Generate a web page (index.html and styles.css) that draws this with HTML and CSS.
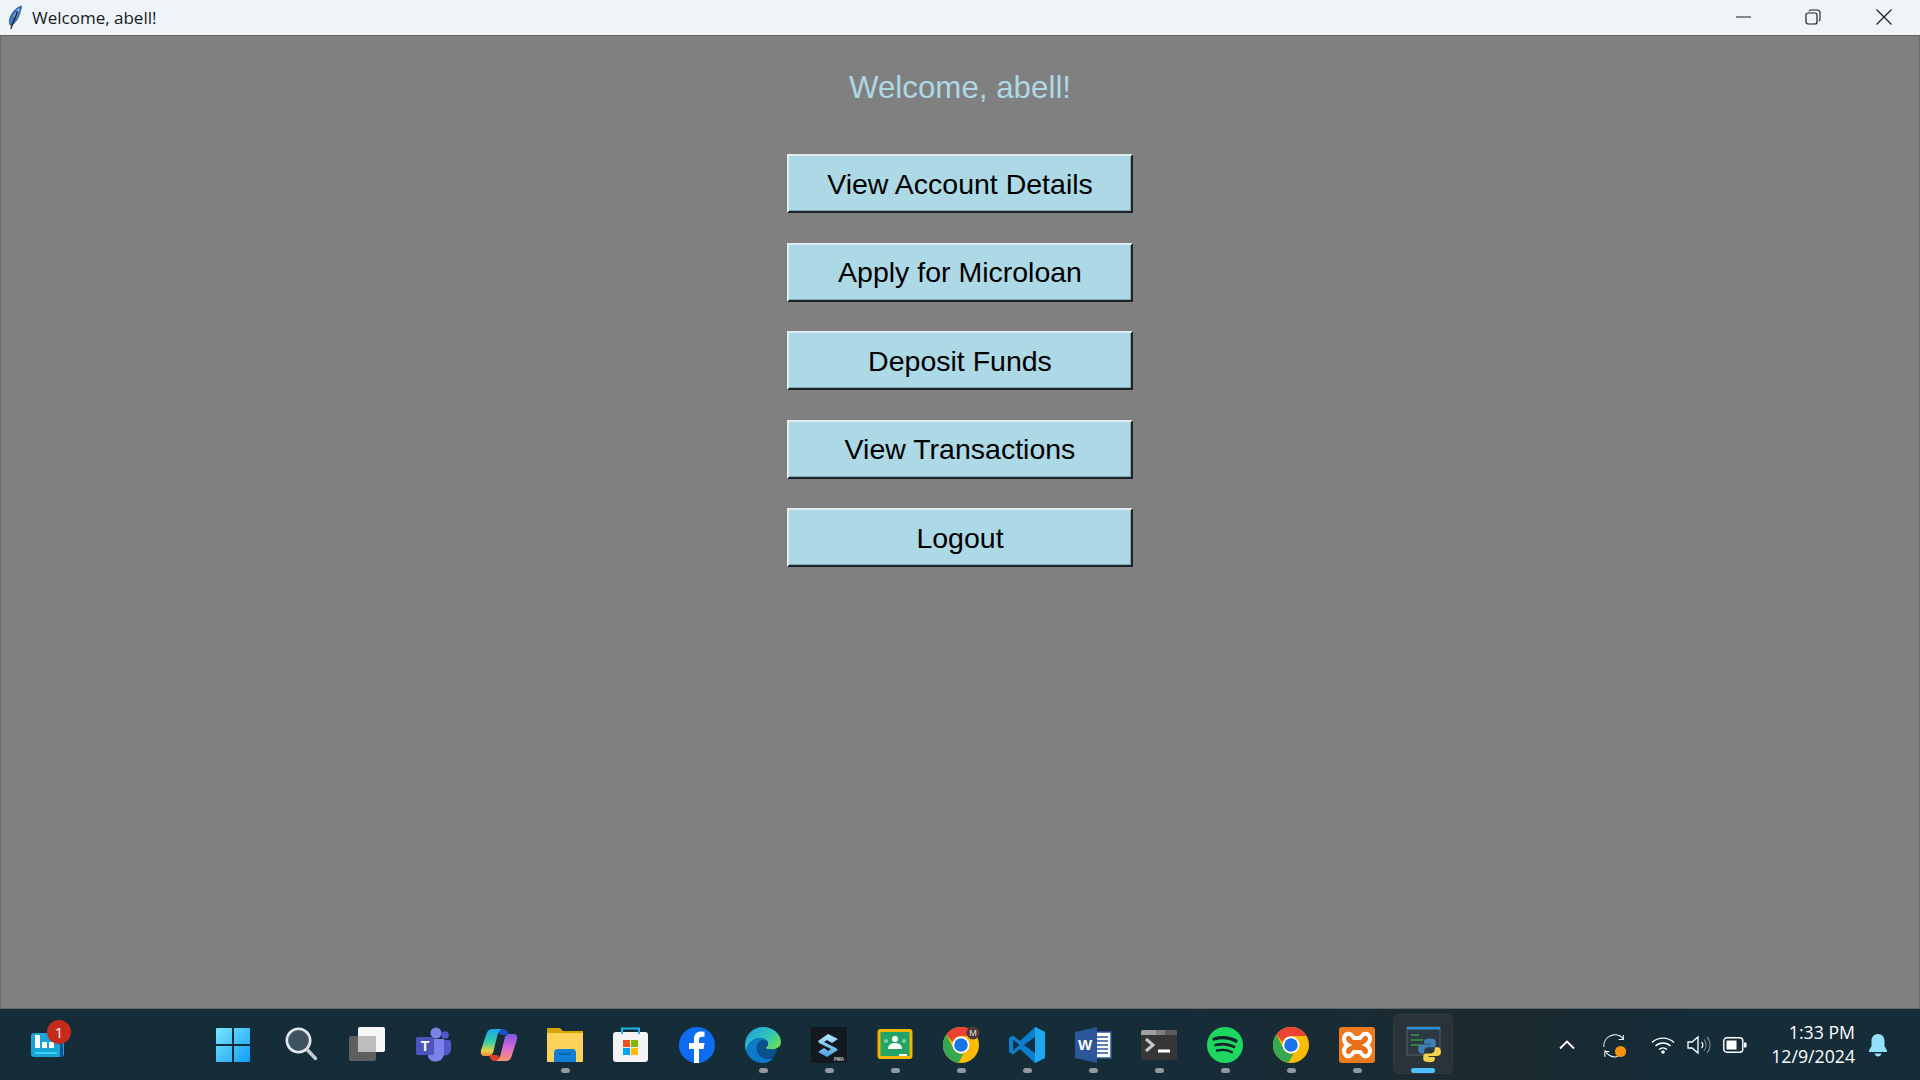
FILE: index.html
```html
<!DOCTYPE html>
<html lang="en">
<head>
<meta charset="utf-8">
<title>Welcome, abell!</title>
<link rel="stylesheet" href="styles.css">
</head>
<body>
<div class="screen">
  <header class="titlebar">
    <svg class="feather" viewBox="0 0 16 26"><path d="M14.500 1C9 2.500 4 8 2.500 15c-.4 2 0 4 1 5.500C8 19 11 14 12.500 9 13.500 6 14.500 3.500 14.500 1z" fill="#3a7ad0" stroke="#3b4a5f" stroke-width=".8"/><path d="M12 4 7 12" stroke="#a8cef2" stroke-width="1.500"/><path d="M10.500 6 3.800 24" stroke="#1a1a1a" stroke-width="1.200"/></svg>
    <span class="title-text">Welcome, abell!</span>
    <div class="win-controls">
      <svg class="wc wc-min" viewBox="0 0 16 16"><path d="M0 8h15" stroke="#1a1a1a" stroke-width="1"/></svg>
      <svg class="wc wc-max" viewBox="0 0 16 16"><rect x="1" y="4" width="11" height="11" rx="2" fill="none" stroke="#1a1a1a" stroke-width="1.200"/><path d="M4 2.200c.3-.7.900-1.200 1.800-1.200H12c1.700 0 3 1.300 3 3v6.200c0 .9-.5 1.500-1.200 1.800" fill="none" stroke="#1a1a1a" stroke-width="1.100"/></svg>
      <svg class="wc wc-close" viewBox="0 0 16 16"><path d="M.5.500l15 15M15.500.500l-15 15" stroke="#1a1a1a" stroke-width="1.200"/></svg>
    </div>
  </header>

  <main class="app">
    <h1 class="heading">Welcome, abell!</h1>
    <div class="menu">
      <button class="btn">View Account Details</button>
      <button class="btn">Apply for Microloan</button>
      <button class="btn">Deposit Funds</button>
      <button class="btn">View Transactions</button>
      <button class="btn">Logout</button>
    </div>
  </main>

  <footer class="taskbar">
    <div class="widget">
      <svg class="widget-icon" viewBox="0 0 34 24"><rect x="0" y="0" width="33" height="24" rx="3" fill="#1ba3d6"/><rect x="29" y="0" width="3" height="24" fill="#0f4f90"/><rect x="4" y="2" width="5" height="13" fill="#fff"/><rect x="11" y="9" width="5" height="6" fill="#fff"/><rect x="18" y="9" width="5" height="6" fill="#fff"/><rect x="4" y="19" width="22" height="2" fill="#35d6ef"/></svg>
      <span class="badge">1</span>
    </div>

    <div class="apps">
      <div class="slot slot-start"><svg class="ico" viewBox="0 0 36 36"><defs><linearGradient id="w" x1="0" y1="0" x2="1" y2="1"><stop offset="0" stop-color="#7be8fb"/><stop offset="1" stop-color="#109cfa"/></linearGradient></defs><path d="M2 1h15v16H1V2a1 1 0 0 1 1-1zM19 1h15a1 1 0 0 1 1 1v15H19zM1 19h16v16H2a1 1 0 0 1-1-1zM19 19h16v15a1 1 0 0 1-1 1H19z" fill="url(#w)"/></svg></div>

      <div class="slot"><svg class="ico" viewBox="0 0 36 36"><circle cx="15.500" cy="13.500" r="11.700" fill="#3e5561" stroke="#e4e8ea" stroke-width="2.600"/><path d="M24.500 23l8 8.500" stroke="#c6cbcd" stroke-width="3.400" stroke-linecap="round"/></svg></div>

      <div class="slot"><svg class="ico" viewBox="0 0 36 36"><rect x="0" y="9" width="27" height="25" rx="2" fill="#5f5f5f"/><rect x="9" y="0" width="27" height="25" rx="2" fill="#f6f6f6"/><rect x="9" y="9" width="18" height="16" fill="#bdbdbd"/></svg></div>

      <div class="slot"><svg class="ico" viewBox="0 0 36 36"><circle cx="21" cy="6" r="5.500" fill="#7b83eb"/><circle cx="30" cy="8" r="3.800" fill="#5059c9"/><path d="M25 13h9a2 2 0 0 1 2 2v8a6 6 0 0 1-8 5z" fill="#5059c9"/><path d="M13 12h16v14a8.500 8.500 0 0 1-16 4z" fill="#7b83eb"/><rect x="1" y="10" width="18" height="18" rx="1.500" fill="#4b53bc"/><text x="10" y="24" class="ico-t">T</text></svg></div>

      <div class="slot"><svg class="ico" viewBox="0 0 36 36"><defs><linearGradient id="c1" x1="0" y1="0" x2="0" y2="1"><stop offset="0" stop-color="#1ba6f0"/><stop offset=".5" stop-color="#38d0a0"/><stop offset=".8" stop-color="#e8d044"/><stop offset="1" stop-color="#f08a3a"/></linearGradient><linearGradient id="c2" x1="0" y1="0" x2="0" y2="1"><stop offset="0" stop-color="#7a5ae0"/><stop offset=".5" stop-color="#d868d8"/><stop offset="1" stop-color="#f89a6a"/></linearGradient></defs><path d="M14 2h8c3 0 5 2 6 6h-8z" fill="#1c4fc4"/><path d="M22 34h-8c-3 0-5-2-6-6h8z" fill="#e0402a"/><path d="M11 2h10c-3 1-4 4-5 8l-4 16c-1 2-3 3-5 3H3C0 29-1 26 .5 22L5 8C6 4 8 2 11 2z" fill="url(#c1)"/><path d="M25 34H15c3-1 4-4 5-8l4-16c1-2 3-3 5-3h4c3 0 4 3 2.500 7L31 28c-1 4-3 6-6 6z" fill="url(#c2)"/></svg></div>

      <div class="slot has-dot"><svg class="ico" viewBox="0 0 36 36"><path d="M0 2a1 1 0 0 1 1-1h12l3 3h20v30a1 1 0 0 1-1 1H1a1 1 0 0 1-1-1z" fill="#d9a300"/><path d="M0 6h36v28a1 1 0 0 1-1 1H1a1 1 0 0 1-1-1z" fill="#fdd25a"/><path d="M7 35v-9a4 4 0 0 1 4-4h14a4 4 0 0 1 4 4v9z" fill="#0f7fd6"/><path d="M12 27h12" stroke="#0a5a9e" stroke-width="1.500"/></svg></div>

      <div class="slot"><svg class="ico" viewBox="0 0 36 36"><rect x="0" y="5" width="35" height="30" rx="3" fill="#f4f4f4"/><path d="M9 7V1.500h17V7" fill="none" stroke="#1fb6e8" stroke-width="2"/><rect x="10" y="13" width="7" height="7" fill="#f25022"/><rect x="18" y="13" width="7" height="7" fill="#7fba00"/><rect x="10" y="21" width="7" height="7" fill="#00a4ef"/><rect x="18" y="21" width="7" height="7" fill="#ffb900"/></svg></div>

      <div class="slot"><svg class="ico" viewBox="0 0 36 36"><circle cx="18" cy="18" r="18" fill="#0d6cf2"/><path d="M15 36V22h-5v-6h5v-4c0-5 3-7.500 7-7.500 2 0 3.500.3 3.500.3v5h-2.600c-2.300 0-2.900 1.400-2.900 2.900V16h5.500l-.9 6H20v14z" fill="#fff"/></svg></div>

      <div class="slot has-dot"><svg class="ico" viewBox="0 0 36 36"><defs><linearGradient id="e1" x1="0" y1="0" x2="1" y2=".7"><stop offset="0" stop-color="#1b9de2"/><stop offset=".6" stop-color="#2fc4b8"/><stop offset="1" stop-color="#6fdc5c"/></linearGradient></defs><path d="M18 0C8 0 0 8 0 18c0 3 .500 5 1 6 2-8 8-13 14-13 5 0 8 3 8 6 0 1-1 3-3 4 4 2 9 2 12 0 3-1 4-4 4-6C36 7 28 0 18 0z" fill="url(#e1)"/><path d="M1 24c2-8 8-13 14-13 3 0 5 1 6 2-7-1-10 5-9 10s5 9 13 9c2 0 3 0 4-1-3 3-7 5-11 5C10 36 3 31 1 24z" fill="#0c7ac8"/><path d="M21 13c2 1 2 3 2 4 0 1-1 3-3 4 4 2 9 2 12 0-1 7-4 11-7 11-8 0-12-4-13-9s2-11 9-10z" fill="#0b4f8f"/></svg></div>

      <div class="slot has-dot"><svg class="ico" viewBox="0 0 36 36"><defs><linearGradient id="s1" x1="0" y1="0" x2="0" y2="1"><stop offset="0" stop-color="#b4ecf8"/><stop offset="1" stop-color="#4a9fe0"/></linearGradient></defs><rect width="36" height="36" fill="#14181f"/><path d="M7 14L17 7l10 5-6 4-5-3-3 2 12 6 2 2-11 7-9-5 6-4 4 3 3-2-12-6z" fill="url(#s1)"/><text x="28" y="33.500" class="ico-pma">PMA</text></svg></div>

      <div class="slot has-dot"><svg class="ico" viewBox="0 0 36 36"><rect x="2" y="3.500" width="32" height="27" rx="1.500" fill="#22a565" stroke="#f4b400" stroke-width="3"/><circle cx="18" cy="12" r="3" fill="#fff"/><path d="M11 22c0-4 3-6 7-6s7 2 7 6z" fill="#fff"/><circle cx="9" cy="14" r="2" fill="#7fd0a8"/><circle cx="27" cy="14" r="2" fill="#7fd0a8"/><path d="M22 28h8" stroke="#fff" stroke-width="2"/></svg></div>

      <div class="slot has-dot"><svg class="ico" viewBox="0 0 36 36"><use href="#chrome-mark"/><circle cx="30" cy="6" r="6.500" fill="#4e3a35"/><text x="30" y="9" class="ico-m">M</text></svg></div>

      <div class="slot has-dot"><svg class="ico" viewBox="0 0 36 36"><path d="M26 0l10 5v26l-10 5-15-14-7 5.500L0 25v-14l4-2.500 7 5.500z" fill="#0b7fcb"/><path d="M26 0l10 5v26l-10 5z" fill="#1fa8f0"/><path d="M26 10v16l-11-8z" fill="#14202a" opacity=".85"/><path d="M4 12.500l6.500 5.500-6.500 5.500z" fill="#14202a" opacity=".85"/></svg></div>

      <div class="slot has-dot"><svg class="ico" viewBox="0 0 36 36"><rect x="16" y="5" width="20" height="26" fill="#fff" stroke="#2b579a" stroke-width="1.500"/><path d="M20 10h13M20 14h13M20 18h13M20 22h13M20 26h13" stroke="#2b579a" stroke-width="1.600"/><path d="M0 5L22 0v36L0 31z" fill="#2b579a"/><text x="10" y="23" class="ico-w">W</text></svg></div>

      <div class="slot has-dot"><svg class="ico" viewBox="0 0 36 36"><rect y="3" width="36" height="30" rx="2" fill="#363636"/><path d="M2 3h13v5H0V5a2 2 0 0 1 2-2z" fill="#a0a0a0"/><path d="M15 3h9v5h-9z" fill="#808080"/><path d="M24 3h10a2 2 0 0 1 2 2v3H24z" fill="#5c5c5c"/><path d="M5 12l7 6-7 6" fill="none" stroke="#c8c8c8" stroke-width="3"/><path d="M17 24h12" stroke="#fff" stroke-width="3"/></svg></div>

      <div class="slot has-dot"><svg class="ico" viewBox="0 0 36 36"><circle cx="18" cy="18" r="18" fill="#1ed760"/><path d="M7 12c7-2 15-2 22 2" fill="none" stroke="#14202a" stroke-width="3.200" stroke-linecap="round"/><path d="M8.500 18c6-1.500 13-1.200 18.500 1.800" fill="none" stroke="#14202a" stroke-width="2.800" stroke-linecap="round"/><path d="M10 23.500c5-1 10.500-.8 15 1.700" fill="none" stroke="#14202a" stroke-width="2.300" stroke-linecap="round"/></svg></div>

      <div class="slot has-dot"><svg class="ico" viewBox="0 0 36 36"><g id="chrome-mark"><circle cx="18" cy="18" r="18" fill="#fbbc04"/><path d="M18 0a18 18 0 0 1 15.600 9H18a9 9 0 0 0-8.500 6L3.300 7.600A18 18 0 0 1 18 0z" fill="#ea4335"/><path d="M3.300 7.600L10.600 22a9 9 0 0 0 10 4.500L15.600 35.800A18 18 0 0 1 3.300 7.600z" fill="#34a853"/><circle cx="18" cy="18" r="8.500" fill="#fff"/><circle cx="18" cy="18" r="6.800" fill="#1a73e8"/></g></svg></div>

      <div class="slot has-dot"><svg class="ico" viewBox="0 0 36 36"><rect width="36" height="36" rx="3" fill="#ee7a1e"/><path d="M11 7c-3-1-6 1-6 5 0 3 2 5 4 6-2 1-4 3-4 6 0 4 3 6 6 5 2-1 3-3 4-4h6c1 1 2 3 4 4 3 1 6-1 6-5 0-3-2-5-4-6 2-1 4-3 4-6 0-4-3-6-6-5-2 1-3 3-4 4h-6c-1-1-2-3-4-4z" fill="#e8701a" stroke="#fff" stroke-width="4"/></svg></div>

      <div class="slot slot-active"><svg class="ico" viewBox="0 0 36 36"><rect x="2" y="0" width="33" height="28" fill="#2c3943" stroke="#5a6a78" stroke-width=".8"/><rect x="2" y="0" width="33" height="2.500" fill="#2a8fd0"/><path d="M6 8h8M6 13h12M6 18h10" stroke="#2f9a4a" stroke-width="1.300"/><g transform="translate(6 3.500) scale(.88)"><path d="M21 9c-4 0-6 1-6 3v3h7v1h-10c-2.500 0-4 2-4 5s1.500 5 4 5h3v-3c0-2 2-4 4-4h6c2 0 3-1 3-3v-4c0-2-3-3-7-3z" fill="#3f7fb5"/><path d="M21 36c4 0 6-1 6-3v-3h-7v-1h10c2.500 0 4-2 4-5s-1.500-5-4-5h-3v3c0 2-2 4-4 4h-6c-2 0-3 1-3 3v4c0 2 3 3 7 3z" fill="#f5d24c"/></g></svg></div>
    </div>

    <div class="tray">
      <svg class="t-chev" viewBox="0 0 16 10"><path d="M1 8.500L8 1.500l7 7" fill="none" stroke="#fff" stroke-width="1.800"/></svg>
      <svg class="t-sync" viewBox="0 0 26 26"><path d="M22 5A12 12 0 0 0 1 14" fill="none" stroke="#fff" stroke-width="1.100"/><path d="M22 1v5h-5" fill="none" stroke="#fff" stroke-width="1.100"/><path d="M2 17.500a12 12 0 0 0 14 7" fill="none" stroke="#fff" stroke-width="1.100"/><path d="M2 25v-6h5" fill="none" stroke="#fff" stroke-width="1.100"/><circle cx="19" cy="19" r="6" fill="#f7930e"/></svg>
      <svg class="t-wifi" viewBox="0 0 24 18"><path d="M1 6.500a16 16 0 0 1 22 0M4.500 10a11 11 0 0 1 15 0M8 13.500a6 6 0 0 1 8 0" fill="none" stroke="#fff" stroke-width="1.400"/><circle cx="12" cy="16" r="1.800" fill="#fff"/></svg>
      <svg class="t-vol" viewBox="0 0 24 20"><path d="M1 7h4l6-5v16l-6-5H1z" fill="none" stroke="#fff" stroke-width="1.300"/><path d="M14.500 7a4 4 0 0 1 0 6" fill="none" stroke="#fff" stroke-width="1.200"/><path d="M17 4.500a8 8 0 0 1 0 11M20 2a12 12 0 0 1 0 16" fill="none" stroke="#71808a" stroke-width="1.200"/></svg>
      <svg class="t-batt" viewBox="0 0 24 16"><rect x=".8" y=".8" width="19" height="14.400" rx="3" fill="none" stroke="#fff" stroke-width="1.400"/><rect x="3.500" y="3.500" width="10" height="9" fill="#fff"/><path d="M21 5.500h1.500a1 1 0 0 1 1 1v3a1 1 0 0 1-1 1H21z" fill="#fff"/></svg>
      <div class="clock"><span>1:33 PM</span><span>12/9/2024</span></div>
      <svg class="t-bell" viewBox="0 0 20 24"><path d="M10 1c-4 0-6.500 3-6.500 7v5L1 17.500c-.3.800 0 1.500 1 1.500h16c1 0 1.300-.7 1-1.500L16.500 13V8C16.500 4 14 1 10 1z" fill="#93e1fb"/><path d="M6.500 20.500h7C13 22.500 11.500 23.500 10 23.500s-3-1-3.500-3z" fill="#93e1fb"/></svg>
    </div>
  </footer>
</div>
</body>
</html>
```

FILE: styles.css
```css
* { box-sizing: border-box; }
html, body { margin: 0; padding: 0; height: 100%; overflow: hidden; }
.screen { width: 1920px; height: 1080px; display: flex; flex-direction: column; }

.titlebar {
  height: 36px; flex: none; display: flex; align-items: center;
  background: #eff4f9; border-bottom: 1px solid #636363; padding-left: 7px;
}
.feather { width: 16px; height: 26px; margin-right: 9px; }
.title-text { font: 400 17px "Open Sans", "Noto Sans", sans-serif; color: #1a1a1a; }
.win-controls { margin-left: auto; display: flex; align-items: center; margin-top: -2px; }
.wc { width: 16px; height: 16px; }
.wc-min { margin-right: 53px; }
.wc-max { margin-right: 55px; }
.wc-close { margin-right: 28px; }

.app {
  flex: 1; background: #808080; display: flex; flex-direction: column; align-items: center;
  box-shadow: inset 1px 0 0 #6c6c6c, inset -1px 0 0 #6c6c6c, inset 0 -1px 0 #5e6366;
  padding-top: 33px;
}
.heading {
  margin: 0; font: 400 31.300px/38px "Liberation Sans", Arial, sans-serif; color: #add8e6;
}
.menu { margin-top: 47px; display: flex; flex-direction: column; gap: 29.600px; }
.btn {
  width: 346px; height: 59px; padding: 1px 0 0; background: #add8e6; color: #000;
  font: 400 28.500px "Liberation Sans", Arial, sans-serif;
  border-style: solid; border-width: 2px; border-color: #e0edf1 #1c2428 #1c2428 #e0edf1;
  box-shadow: inset -1px -1px 0 #86a8b3;
}

.taskbar {
  height: 71px; flex: none; position: relative; display: flex; align-items: center;
  background: linear-gradient(90deg, #152c39 0%, #152c39 60%, #1b2b31 75%, #1b2a30 79%, #152c39 88%, #152c39 100%);
}
.widget { position: relative; width: 34px; height: 24px; margin-left: 31px; }
.widget-icon { width: 34px; height: 24px; display: block; }
.badge {
  position: absolute; left: 16px; top: -13px; width: 24px; height: 24px; border-radius: 50%;
  background: #c42b1c; color: #fff; font: 400 15px/24px "Open Sans", sans-serif; text-align: center;
}

.apps { display: flex; margin-left: 137px; align-self: flex-start; margin-top: 5px; }
.slot {
  width: 66px; height: 60px; padding-top: 2px; position: relative; display: flex; align-items: center; justify-content: center;
}
.ico { width: 36px; height: 36px; display: block; overflow: visible; }
.slot-start .ico { margin-right: 4px; }
.has-dot::after {
  content: ""; position: absolute; left: 29px; bottom: 1px; width: 9px; height: 5px;
  border-radius: 3px; background: #8f999e;
}
.slot-active { width: 60px; margin-left: 3px; border-radius: 6px; background: #2a3438; border: 1px solid #303b40; }
.slot-active::after {
  content: ""; position: absolute; left: 17px; bottom: 0; width: 24px; height: 5px;
  border-radius: 3px; background: #4cc2ff;
}
.ico-t { font: 700 14px "Liberation Sans", sans-serif; fill: #fff; text-anchor: middle; }
.ico-m { font: 400 9px "Liberation Sans", sans-serif; fill: #e8dcd8; text-anchor: middle; }
.ico-w { font: 700 15px "Liberation Sans", sans-serif; fill: #fff; text-anchor: middle; }
.ico-pma { font: 700 4.500px "Liberation Sans", sans-serif; fill: #ccc; text-anchor: middle; }

.tray { position: absolute; left: 0; right: 0; top: 0; bottom: 0; display: flex; align-items: center; justify-content: flex-end; padding-right: 32px; pointer-events: none; }
.t-chev { width: 16px; height: 10px; margin-right: 28px; }
.t-sync { width: 24px; height: 24px; margin-right: 24px; margin-top: 2px; }
.t-wifi { width: 24px; height: 18px; margin-right: 12px; }
.t-vol { width: 24px; height: 20px; margin-right: 12px; }
.t-batt { width: 24px; height: 16px; margin-right: 24px; }
.clock { display: flex; flex-direction: column; align-items: flex-end; color: #fff; font: 400 17.700px/24px "Open Sans", "Noto Sans", sans-serif; margin-right: 13px; margin-top: -2px; }
.t-bell { width: 20px; height: 24px; }
```
